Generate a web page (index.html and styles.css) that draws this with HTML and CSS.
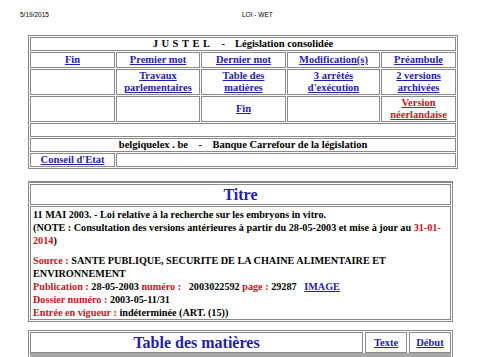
FILE: index.html
```html
<!DOCTYPE html>
<html lang="fr">
<head>
  <meta charset="UTF-8">
  <title>LOI - WET</title>
  <link rel="stylesheet" href="styles.css">
</head>
<body>
  <div class="print-head">
    <span class="print-date">5/19/2015</span>
    <span class="print-title">LOI - WET</span>
  </div>

  <table class="nav">
    <colgroup>
      <col class="c1"><col class="c2"><col class="c3"><col class="c4"><col class="c5">
    </colgroup>
    <tr class="r-justel">
      <td colspan="5" class="center"><span class="spaced">JUSTEL</span><span class="dash">-</span>Législation consolidée</td>
    </tr>
    <tr class="r-links">
      <td class="center"><a href="#">Fin</a></td>
      <td class="center"><a href="#">Premier mot</a></td>
      <td class="center"><a href="#">Dernier mot</a></td>
      <td class="center"><a href="#">Modification(s)</a></td>
      <td class="center"><a href="#">Préambule</a></td>
    </tr>
    <tr class="r-two">
      <td></td>
      <td class="center"><a href="#">Travaux<br>parlementaires</a></td>
      <td class="center"><a href="#">Table des<br>matières</a></td>
      <td class="center"><a href="#">3 arrêtés<br>d'exécution</a></td>
      <td class="center"><a href="#">2 versions<br>archivées</a></td>
    </tr>
    <tr class="r-fin">
      <td></td>
      <td></td>
      <td class="center"><a href="#">Fin</a></td>
      <td></td>
      <td class="center"><a href="#" class="red-link">Version<br>néerlandaise</a></td>
    </tr>
    <tr class="r-small">
      <td colspan="5"></td>
    </tr>
    <tr class="r-small">
      <td colspan="5" class="center">belgiquelex . be &nbsp;&nbsp; - &nbsp;&nbsp; Banque Carrefour de la législation</td>
    </tr>
    <tr class="r-small">
      <td class="center"><a href="#">Conseil d'Etat</a></td>
      <td colspan="4"></td>
    </tr>
  </table>

  <div class="box titre-box">
    <div class="box-head">
      <h1 class="titre">Titre</h1>
    </div>
    <div class="box-body">
      <p>11 MAI 2003. - Loi relative à la recherche sur les embryons in vitro.<br>
      (NOTE : Consultation des versions antérieures à partir du 28-05-2003 et mise à jour au <span class="red">31-01-2014</span>)</p>
      <p class="gap"><span class="red">Source :</span> SANTE PUBLIQUE, SECURITE DE LA CHAINE ALIMENTAIRE ET ENVIRONNEMENT<br>
      <span class="red">Publication :</span> 28-05-2003 <span class="red">numéro :</span> &nbsp; 2003022592 <span class="red">page :</span> 29287 &nbsp; <a href="#">IMAGE</a><br>
      <span class="red">Dossier numéro :</span> 2003-05-11/31<br>
      <span class="red">Entrée en vigueur :</span> indéterminée (ART. (15))</p>
    </div>
  </div>

  <div class="box toc-box">
    <div class="toc-head">
      <h2 class="toc-title">Table des matières</h2>
      <div class="toc-link"><a href="#">Texte</a></div>
      <div class="toc-link"><a href="#">Début</a></div>
    </div>
    <div class="toc-bar"></div>
    <div class="toc-body"></div>
  </div>
</body>
</html>
```

FILE: styles.css
```css
* { box-sizing: border-box; }
body {
  margin: 0;
  background: #fff;
  color: #000;
  font-family: "Liberation Serif", "Times New Roman", serif;
  font-weight: bold;
  font-size: 10.5px;
  line-height: 12px;
}
a { color: #1f22a8; }
.red-link { color: #c8141e; }
.red { color: #c8141e; }
.center { text-align: center; }

.print-head {
  position: relative;
  height: 35px;
  font-family: "Liberation Sans", Arial, sans-serif;
  font-weight: normal;
  font-size: 6.5px;
  line-height: 8px;
}
.print-date { position: absolute; left: 20px; top: 11px; }
.print-title { position: absolute; left: 242px; top: 11px; }

/* nav table */
.nav {
  margin-left: 28px;
  width: 425px;
  border: 1px solid #8a8a8a;
  border-spacing: 1px;
  table-layout: fixed;
}
.nav td {
  border: 1px solid #8a8a8a;
  padding: 0;
  vertical-align: middle;
}
.c1 { width: 85px; }
.c2 { width: 84px; }
.c3 { width: 85px; }
.c4 { width: 93px; }
.c5 { width: 75px; }
.r-justel td { height: 13px; }
.r-links td { height: 16px; }
.r-two td { height: 26px; }
.r-fin td { height: 25px; }
.r-small td { height: 14px; }
.spaced { letter-spacing: 3.5px; }
.dash { margin: 0 10px 0 8px; }

/* boxes */
.box {
  margin-left: 28px;
  width: 425px;
  border: 1px solid #8a8a8a;
  padding: 1px;
}
.titre-box {
  margin-top: 12px;
  border-top-width: 2px;
}
.box-head {
  border: 1px solid #8a8a8a;
  height: 21px;
  display: flex;
  align-items: center;
  justify-content: center;
}
.titre {
  margin: 0;
  font-size: 16px;
  color: #1f22a8;
  line-height: 18px;
}
.box-body {
  margin-top: 1px;
  border: 1px solid #8a8a8a;
  padding: 1px 1px 0 2px;
  font-size: 10.2px;
  line-height: 13px;
}
.box-body p { margin: 0; }
.box-body p.gap { margin-top: 7px; }

.toc-box { margin-top: 8px; }
.toc-head {
  display: flex;
  gap: 2px;
  height: 21px;
}
.toc-title {
  flex: 1;
  margin: 0;
  border: 1px solid #8a8a8a;
  text-align: center;
  font-size: 16px;
  line-height: 19px;
  color: #1f22a8;
}
.toc-link {
  width: 42px;
  border: 1px solid #8a8a8a;
  display: flex;
  align-items: center;
  justify-content: center;
}
.toc-bar {
  height: 4px;
  background: #a8a8a8;
}
.toc-body {
  height: 20px;
  border: 1px solid #8a8a8a;
}
```
